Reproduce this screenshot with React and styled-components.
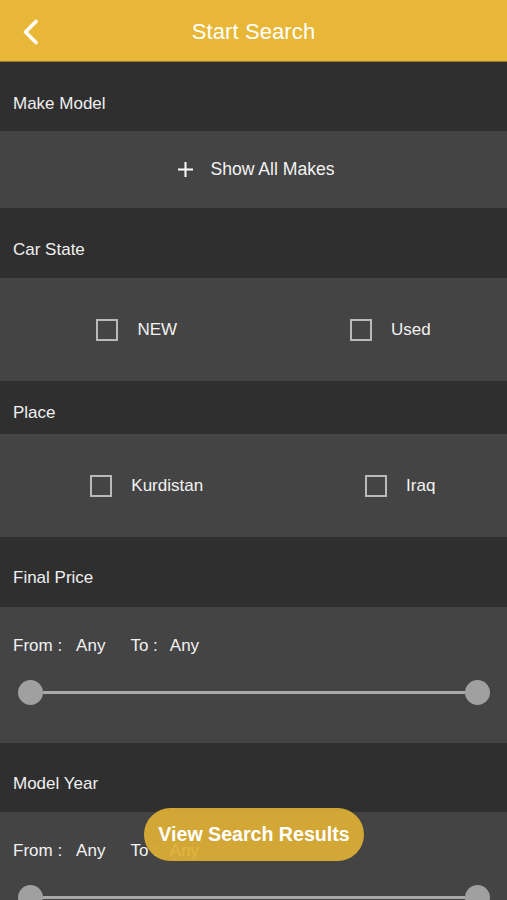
import React from "react";
import styled, { createGlobalStyle } from "styled-components";

const GlobalStyle = createGlobalStyle`
  html, body {
    margin: 0;
    padding: 0;
    background: #444444;
  }
  body {
    font-family: "Liberation Sans", Arial, sans-serif;
    color: #f2f2f2;
  }
`;

const states = ["NEW", "Used"];
const places = ["Kurdistan", "Iraq"];

const Range = () => (
  <RangeBlock height={136}>
    <RangeText>
      <span>From :</span>
      <Value gap={14}>Any</Value>
      <Value gap={25}>To :</Value>
      <Value gap={12}>Any</Value>
    </RangeText>
    <Slider>
      <Knob />
      <Track />
      <Knob />
    </Slider>
  </RangeBlock>
);

const App = () => {
  return (
    <Screen>
      <GlobalStyle />
      <TopBar>
        <BackButton>
          <svg width="18" height="26" viewBox="0 0 18 26">
            <polyline
              points="14,2.5 3.5,13 14,23.5"
              fill="none"
              stroke="#ffffff"
              strokeWidth="3.6"
              strokeLinecap="round"
              strokeLinejoin="round"
            />
          </svg>
        </BackButton>
        <Title>Start Search</Title>
      </TopBar>

      <SectionHead height={69} top={32}>Make Model</SectionHead>
      <ShowAll height={77}>
        <svg width="17" height="17" viewBox="0 0 17 17">
          <line x1="8.5" y1="1" x2="8.5" y2="16" stroke="#fff" strokeWidth="2" />
          <line x1="1" y1="8.5" x2="16" y2="8.5" stroke="#fff" strokeWidth="2" />
        </svg>
        <span>Show All Makes</span>
      </ShowAll>

      <SectionHead height={70} top={32}>Car State</SectionHead>
      <OptionRow height={103}>
        {states.map((s) => (
          <OptionCell key={s} shift={20}>
            <Box />
            <OptionLabel>{s}</OptionLabel>
          </OptionCell>
        ))}
      </OptionRow>

      <SectionHead height={53} top={22}>Place</SectionHead>
      <OptionRow height={103}>
        {places.map((p) => (
          <OptionCell key={p} shift={40}>
            <Box />
            <OptionLabel>{p}</OptionLabel>
          </OptionCell>
        ))}
      </OptionRow>

      <SectionHead height={70} top={31}>Final Price</SectionHead>
      <Range />

      <SectionHead height={69} top={31}>Model Year</SectionHead>
      <Range />

      <ResultsButton>View Search Results</ResultsButton>
    </Screen>
  );
};

const Screen = styled.div`
  position: relative;
  width: 507px;
  height: 900px;
  overflow: hidden;
  background: #444444;
`;

const TopBar = styled.header`
  height: 61px;
  background: #e8b737;
  border-bottom: 1px solid #9a7a25;
  display: flex;
  align-items: center;
  justify-content: center;
  position: relative;
`;

const BackButton = styled.div`
  position: absolute;
  left: 22px;
  top: 19px;
  width: 18px;
  height: 26px;
`;

const Title = styled.h1`
  margin: 0;
  padding-top: 2px;
  font-size: 22px;
  font-weight: 400;
  color: #ffffff;
  letter-spacing: 0.1px;
`;

const SectionHead = styled.div`
  box-sizing: border-box;
  height: ${(p) => p.height}px;
  padding: ${(p) => p.top}px 13px 0;
  background: #2f2f2f;
  font-size: 17px;
  line-height: 20px;
  color: #f0f0f0;
`;

const ShowAll = styled.div`
  height: ${(p) => p.height}px;
  background: #444444;
  display: flex;
  align-items: center;
  justify-content: center;
  gap: 16px;
  padding-left: 5px;
  font-size: 17.6px;
  color: #f2f2f2;
`;

const OptionRow = styled.div`
  height: ${(p) => p.height}px;
  background: #444444;
  display: grid;
  grid-template-columns: 1fr 1fr;
  align-items: center;
`;

const OptionCell = styled.div`
  display: flex;
  align-items: center;
  justify-content: center;
  gap: 19px;
  padding-left: ${(p) => p.shift}px;
`;

const Box = styled.span`
  box-sizing: border-box;
  width: 22px;
  height: 22px;
  border: 2px solid #b9b9b9;
`;

const OptionLabel = styled.span`
  font-size: 17px;
  color: #f2f2f2;
`;

const RangeBlock = styled.div`
  box-sizing: border-box;
  height: ${(p) => p.height}px;
  background: #444444;
  padding: 29px 0 0;
`;

const RangeText = styled.div`
  display: flex;
  align-items: center;
  padding-left: 13px;
  font-size: 17px;
  line-height: 20px;
  color: #f2f2f2;
`;

const Value = styled.span`
  margin-left: ${(p) => p.gap}px;
`;

const Slider = styled.div`
  display: flex;
  align-items: center;
  margin: 24px 17px 0 18px;
`;

const Knob = styled.span`
  width: 25px;
  height: 25px;
  border-radius: 50%;
  background: #a0a0a0;
  flex: none;
`;

const Track = styled.span`
  flex: 1;
  height: 3px;
  background: #a8a8a8;
`;

const ResultsButton = styled.button`
  position: absolute;
  left: 144px;
  top: 808px;
  width: 220px;
  height: 53px;
  border: none;
  border-radius: 27px;
  background: rgba(224, 176, 52, 0.92);
  color: #ffffff;
  font-family: "Liberation Sans", Arial, sans-serif;
  font-size: 19.6px;
  font-weight: 700;
  padding: 0;
`;

export default App;
